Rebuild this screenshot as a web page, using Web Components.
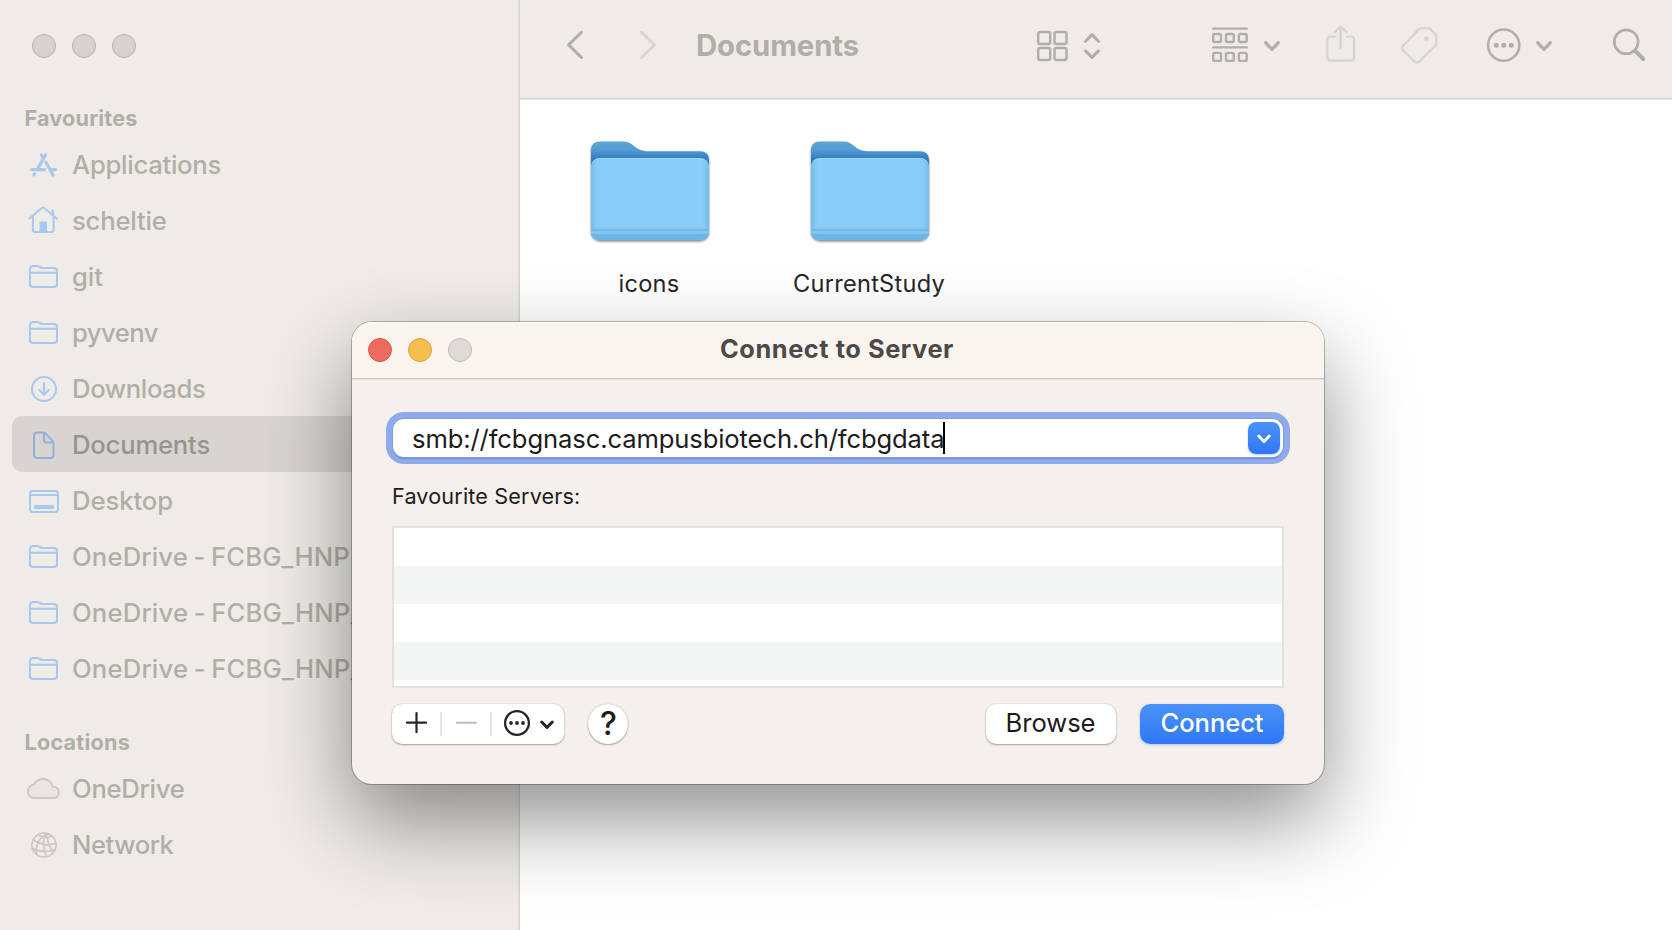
<!DOCTYPE html>
<html lang="en">
<head>
<meta charset="utf-8">
<title>Documents</title>
<style>
html,body{margin:0;height:100%;overflow:hidden;background:#fff}
body{font-family:Inter,"Liberation Sans",sans-serif;color:#262626}
</style>
</head>
<body>
<finder-app></finder-app>
<script>
const define=(name,html,init)=>{
  const t=document.createElement('template');
  t.innerHTML=html;
  customElements.define(name,class extends HTMLElement{
    constructor(){super();this.attachShadow({mode:'open'}).append(t.content.cloneNode(true));}
    connectedCallback(){if(init)init(this,this.shadowRoot);}
  });
};

/* icons: name -> [viewBox, markup] */
const folder='<path d="M4 11q0-3 3-3h4.3q1.4 0 2.4.9l.7.5q.8.6 1.9.6H28q3 0 3 3v13q0 3-3 3H7q-3 0-3-3zM4 14.8H31"/>';
const ICONS={
  apps:['0 0 36 36','<g stroke-width="3.2"><path d="M19.5 9 11.7 22.6M8.6 27.6 7.8 28.9M15.4 9 17 11.7M19.9 16.3 27 29M5.6 23.6H18.6M25.4 23.6H29.6"/></g>'],
  home:['0 0 36 36','<path d="M3 16.8 15.9 5.9q1.1-.9 2.2 0L31 16.8M6.9 14.5V28q0 2 2 2H25.6q2 0 2-2V14.5"/><path d="M13.5 30V21q0-1.5 1.5-1.5h4.5q1.5 0 1.5 1.5v9zM25.6 7.5h2.6v6.5l-2.6-2z" fill="currentColor" stroke="none"/>'],
  folder:['0 0 36 36',folder],
  down:['0 0 36 36','<circle cx="18" cy="19" r="12"/><path d="M18 13.2V24.6M13.3 20 18 24.7 22.7 20"/>'],
  doc:['0 0 36 36','<path d="M8 9.5q0-3 3-3h6q1.6 0 2.7 1.1l6.7 7q1.1 1.1 1.1 2.7V29q0 3-3 3H11q-3 0-3-3zM18 7V14.5q0 2 2 2H27"/>'],
  desktop:['0 0 36 36','<rect x="4" y="9" width="28" height="21" rx="3"/><path d="M4 12.9H32"/><rect x="8.2" y="23" width="19.6" height="4" rx=".6" fill="currentColor" stroke="none"/>'],
  cloud:['0 0 36 36','<path d="M8.2 28C4.600 28 2 25.500 2 21.600 2 17.700 4.600 14.800 8.300 14.300 9.800 11 13.300 9 17.300 9 21.900 9 25.700 12 26.600 16.600 30.300 16.600 33 19 33 22.300 33 25.700 30.300 28 26.900 28Z" fill="#e9e6e1"/>'],
  globe:['0 0 36 36','<g stroke-width="1.700"><circle cx="18" cy="19" r="12"/><path d="M7.300 13.800Q18 21.500 29.700 17.300M6.300 22.500Q17 27.500 28.300 24M22.500 7.800C12 11 9.500 20.500 10.500 28M19.500 7Q15 18 20.500 30.500M21.500 7.500Q20.500 18 27.500 26.200M12 8.800Q17.500 12.500 26 10.300"/></g>'],
  back:['566 20 18 50','<path stroke-width="3" d="M581.500 32.300 568.600 44.900 581.500 57.500"/>'],
  fwd:['639 20 18 50','<path stroke-width="3" d="M641.500 32.300 654.500 44.900 641.500 57.500"/>'],
  grid:['1036 20 33 50','<g stroke-width="2.500"><rect x="1038.200" y="32" width="12" height="11.900" rx="2"/><rect x="1054.500" y="32" width="12" height="11.900" rx="2"/><rect x="1038.200" y="48" width="12" height="11.900" rx="2"/><rect x="1054.500" y="48" width="12" height="11.900" rx="2"/></g>'],
  updown:['1083 20 18 50','<path stroke-width="3" d="M1085.500 41.200 1092 34.600 1098.500 41.200M1085.500 50.900 1092 57.400 1098.500 50.900"/>'],
  group:['1211 20 38 50','<g stroke-width="2.400"><path stroke-width="2.400" d="M1213.200 28.600H1246.800M1213.200 47.400H1246.800"/><rect x="1213.200" y="34" width="7.800" height="8" rx="1.500"/><rect x="1226" y="34" width="7.800" height="8" rx="1.500"/><rect x="1238.900" y="34" width="7.800" height="8" rx="1.500"/><rect x="1213.200" y="52.900" width="7.800" height="8" rx="1.500"/><rect x="1226" y="52.900" width="7.800" height="8" rx="1.500"/><rect x="1238.900" y="52.900" width="7.800" height="8" rx="1.500"/></g>'],
  chev:['1263 20 18 50','<path stroke-width="3.200" d="M1265.600 42.700 1272 49.300 1278.400 42.700"/>'],
  share:['1325 20 31 50','<path stroke-width="2.400" d="M1334.800 36.600H1330.300q-3 0-3 3V57.500q0 3 3 3H1351q3 0 3-3V39.600q0-3-3-3H1346.600"/><path stroke-width="2.600" d="M1340.600 27V47.700M1334.800 32.200 1340.600 26.400 1346.400 32.200"/>'],
  tag:['1400 20 39 50','<path stroke-width="2.400" d="M1418.300 29.600Q1419.600 28.400 1421.400 28.400H1427.600Q1429.400 28.400 1430.600 29.600L1435 34Q1436.300 35.300 1436.300 37V43.200Q1436.300 44.800 1435 46L1418.600 62Q1416.500 63.700 1414.500 61.800L1402.800 50.300Q1400.900 48.300 1402.800 46.200Z" transform="translate(.2 -.2)"/><circle cx="1426.500" cy="38.600" r="2.500" fill="currentColor" stroke="none"/>'],
  more:['1486 20 36 50','<circle cx="1503.700" cy="45.200" r="15.600" stroke-width="2.500"/><g fill="currentColor" stroke="none"><circle cx="1496.200" cy="45.200" r="2.500"/><circle cx="1503.700" cy="45.200" r="2.500"/><circle cx="1511.300" cy="45.200" r="2.500"/></g>'],
  search:['1612 20 34 50','<circle cx="1626.200" cy="41.800" r="11.900" stroke-width="2.700"/><path stroke-width="4" d="M1635.500 51.100 1643.200 59"/>'],
  plus:['0 0 22 22','<path stroke-width="2.200" d="M11.500 1.200V20.200M2 10.700H21"/>'],
  minus:['0 0 22 22','<path d="M2 10.700H21"/>'],
  dots:['0 0 28 28','<circle cx="14" cy="14" r="11.900" stroke-width="2.300"/><g fill="currentColor" stroke="none"><circle cx="8" cy="14" r="1.900"/><circle cx="14" cy="14" r="1.900"/><circle cx="20" cy="14" r="1.900"/></g>'],
  vee:['0 0 16 12','<path stroke-width="3" d="M2.700 3 8 8.400 13.300 3"/>']
};
define('mac-icon','<style>:host{display:block;flex:none;line-height:0}svg{display:block;fill:none;stroke:currentColor;stroke-width:2;stroke-linecap:round;stroke-linejoin:round}</style><span></span>',(el,r)=>{
  const icon=ICONS[el.getAttribute('name')];
  if(!icon)return;
  const [,,w,h]=icon[0].split(' ');
  r.querySelector('span').innerHTML=`<svg width="${w}" height="${h}" viewBox="${icon[0]}">${icon[1]}</svg>`;
});

/* label whose tracking is adjusted so that the run has the given width */
define('tracked-text','<style>:host{display:block;flex:none;white-space:nowrap}span{display:inline-block;white-space:pre}</style><span><slot></slot></span>',(el,r)=>{
  const s=r.querySelector('span'),w=+el.getAttribute('width'),n=[...el.textContent].length;
  queueMicrotask(()=>{
    const a=s.getBoundingClientRect().width;
    if(a)s.style.letterSpacing=((w-a)/n).toFixed(3)+'px';
  });
});

define('window-lights','<style>:host{display:flex;gap:16px;flex:none}i{width:24px;height:24px;border-radius:50%;box-sizing:border-box;border:1px solid #b5b2ae;background:#d6d3cf}:host([active]) i{border-color:#bcb9b6;background:#dedad7}:host([active]) i:nth-of-type(1){background:#ed6a5e;border-color:#d5564c}:host([active]) i:nth-of-type(2){background:#f5bf4f;border-color:#d9a13c}</style><i></i><i></i><i></i>');

define('side-item',`<style>
:host{display:flex;align-items:center;height:56px;box-sizing:border-box;margin:0 11px 0 12px;padding-left:14px;color:#b1aea9;font-size:25.700px;font-weight:500;line-height:30px;word-spacing:-1.500px;border-radius:10px}
:host([selected]){background:#d8d5d0;color:#97948f}
.icon{color:#a9c8ef;width:36px;margin-right:10px;flex:none}
:host([selected]) .icon{color:#8fb0dc}
:host([grey]) .icon{color:#cbc8c4}
.text{padding-top:1px}
</style><div class="icon"></div><div class="text"><slot></slot></div>`,(el,r)=>{
  const icon=document.createElement('mac-icon');
  icon.setAttribute('name',el.getAttribute('icon'));
  r.querySelector('.icon').replaceChildren(icon);
});

define('side-bar',`<style>
:host{display:flex;flex-direction:column;width:520px;box-sizing:border-box;background:#efece7;border-right:1px solid #d6d3d0;box-shadow:inset -2px 0 2px -1px #e2dfda;flex:none}
window-lights{margin:34px 0 42px 32px}
h2{margin:0;height:36px;padding-left:24.500px;font-size:21.600px;font-weight:650;line-height:36px;color:#b1aea9}
h2.loc{margin-top:28px}
</style>
<window-lights></window-lights>
<h2><tracked-text width="113">Favourites</tracked-text></h2>
<side-item icon="apps"><tracked-text width="149">Applications</tracked-text></side-item>
<side-item icon="home"><tracked-text width="94.500">scheltie</tracked-text></side-item>
<side-item icon="folder"><tracked-text width="31">git</tracked-text></side-item>
<side-item icon="folder"><tracked-text width="86">pyvenv</tracked-text></side-item>
<side-item icon="down"><tracked-text width="133.500">Downloads</tracked-text></side-item>
<side-item icon="doc" selected><tracked-text width="138">Documents</tracked-text></side-item>
<side-item icon="desktop"><tracked-text width="101">Desktop</tracked-text></side-item>
<side-item icon="folder"><tracked-text width="278">OneDrive - FCBG_HNP</tracked-text></side-item>
<side-item icon="folder"><tracked-text width="290.500">OneDrive - FCBG_HNP_</tracked-text></side-item>
<side-item icon="folder"><tracked-text width="290.500">OneDrive - FCBG_HNP_</tracked-text></side-item>
<h2 class="loc"><tracked-text width="105.500">Locations</tracked-text></h2>
<side-item icon="cloud" grey><tracked-text width="112.500">OneDrive</tracked-text></side-item>
<side-item icon="globe" grey><tracked-text width="101.500">Network</tracked-text></side-item>`);

define('finder-toolbar',`<style>
:host{display:flex;align-items:center;height:100px;box-sizing:border-box;padding:0 0 9px 46px;background:#efece8;border-bottom:1px solid #ececeb;box-shadow:inset 0 -1px #d3d1cf;color:#b1aea9}
.pale{color:#d8d5d1}
.fwd{margin-left:55px}
h1{margin:1px 0 0;padding-left:39px;width:340px;font-size:29.300px;font-weight:680;line-height:36px}
.u{margin-left:14px}.g{margin-left:110px}.c{margin-left:14px}.s{margin-left:44px}.t{margin-left:44px}.m{margin-left:47px}.c2{margin-left:13px}.f{margin-left:59px}
</style>
<mac-icon name="back"></mac-icon><mac-icon class="fwd pale" name="fwd"></mac-icon>
<h1><tracked-text width="163">Documents</tracked-text></h1>
<mac-icon name="grid"></mac-icon><mac-icon class="u" name="updown"></mac-icon>
<mac-icon class="g" name="group"></mac-icon><mac-icon class="c" name="chev"></mac-icon>
<mac-icon class="s pale" name="share"></mac-icon><mac-icon class="t pale" name="tag"></mac-icon>
<mac-icon class="m" name="more"></mac-icon><mac-icon class="c2" name="chev"></mac-icon>
<mac-icon class="f" name="search"></mac-icon>`);

define('folder-tile',`<style>
:host{display:flex;flex-direction:column;align-items:center;width:220px;font-size:23.600px;font-weight:400;line-height:30px}
svg{display:block;margin-bottom:22px}
div{margin-right:2px}
</style>
<svg width="126" height="110" viewBox="587 137 126 110">
<defs>
<linearGradient id="b" x1="0" y1="0" x2="0" y2="1"><stop offset="0" stop-color="#5ea5d6"/><stop offset=".3" stop-color="#559dd2"/><stop offset=".65" stop-color="#2f7cc4"/></linearGradient>
<linearGradient id="e" x1="0" x2="1" y1="0" y2="0"><stop offset="0" stop-color="#6fb9e8"/><stop offset=".07" stop-color="#88ccf6" stop-opacity="0"/><stop offset=".93" stop-color="#88ccf6" stop-opacity="0"/><stop offset="1" stop-color="#6fb9e8"/></linearGradient>
<filter id="s" x="-10%" y="-10%" width="120%" height="125%"><feDropShadow dx="0" dy="1.500" stdDeviation="1.200" flood-color="#000" flood-opacity=".5"/></filter>
</defs>
<g filter="url(#s)">
<path fill="url(#b)" d="M591 150.500Q591 141.500 600 141.500H624Q628 141.500 631 143.800L637 148.300Q641 151.200 646 151.200H700Q709 151.200 709 160V168H591Z"/>
<rect x="591" y="158" width="118" height="82" rx="9" fill="#89cdf7"/>
</g>
<rect x="591" y="158" width="118" height="82" rx="9" fill="url(#e)"/>
<path d="M592.500 162Q595 158.500 600 158.500H700Q705 158.500 707.500 162" fill="none" stroke="#9bd6f8"/>
<path d="M591 228H709V231Q709 240 700 240H600Q591 240 591 231Z" fill="#76bdec" opacity=".6"/>
<path d="M591 235H709Q707 240 700 240H600Q593 240 591 235Z" fill="#6db5e4"/>
<path d="M591 230.200H709" stroke="#6cb4e2"/><path d="M591 232.500H709" stroke="#83c8f2" stroke-width="2"/><path d="M591 234.500H709" stroke="#6cb4e2"/>
</svg><div><slot></slot></div>`);

define('finder-main',`<style>
:host{display:flex;flex-direction:column;flex:1;min-width:0;background:#fff}
section{display:flex;padding:37px 0 0 20px}
</style>
<finder-toolbar></finder-toolbar>
<section><folder-tile><tracked-text width="61">icons</tracked-text></folder-tile><folder-tile><tracked-text width="152">CurrentStudy</tracked-text></folder-tile></section>`);

define('push-button',`<style>
:host{display:flex;align-items:center;justify-content:center;height:40px;box-sizing:border-box;padding:0 1px 3px 0;border-radius:10px;background:#fff;box-shadow:0 0 1px rgba(0,0,0,.3),0 1px 2px rgba(0,0,0,.32);font-size:25.600px;font-weight:400;line-height:30px;color:#1c1c1c;flex:none}
:host([primary]){background:linear-gradient(#4a92f8,#2f78f5);color:#fff;font-weight:500;box-shadow:0 1px 3px rgba(60,110,230,.35);padding-right:0}
:host([round]){width:40px;border-radius:50%;font-size:32px;font-weight:500;padding:0 0 1px 1px}
</style><slot></slot>`);

define('segment-bar',`<style>
:host{display:flex;align-items:center;width:172px;height:40px;border-radius:10px;background:#fff;box-shadow:0 0 1px rgba(0,0,0,.3),0 1px 2px rgba(0,0,0,.32);color:#262626;flex:none}
div{display:flex;align-items:center;justify-content:center;width:48px;height:24px;padding-bottom:2px;box-sizing:border-box}
i{width:2px;height:24px;background:#e5e5e5}
.off{color:#bdbdbd}
.menu{gap:8px;flex:1;padding:0 0 0 2px}
.menu mac-icon:first-child{margin-top:-2px}
.menu mac-icon:last-child{margin-top:1px}
</style>
<div><mac-icon name="plus"></mac-icon></div><i></i><div class="off"><mac-icon name="minus"></mac-icon></div><i></i><div class="menu"><mac-icon name="dots"></mac-icon><mac-icon name="vee"></mac-icon></div>`);

define('address-field',`<style>
:host{display:flex;align-items:center;height:38px;margin:0 1px;box-sizing:border-box;padding:0 3px 0 19px;border-radius:11px;background:#fff;box-shadow:0 0 0 1px #7e9fe4,0 1.500px 0 .5px #7090d4,0 0 0 7px #8fabea;font-size:25.600px;font-weight:400;line-height:30px;color:#1c1c1c}
slot{display:block;padding-top:2px}
i{width:2px;height:32px;background:#000;margin-left:-2px}
span{flex:1}
b{display:flex;align-items:center;justify-content:center;width:32px;height:32px;border-radius:8px;background:linear-gradient(#4a92f8,#2f78f5);box-shadow:0 1px 2px rgba(60,110,230,.35);color:#fff}
b mac-icon{margin-top:1px}
</style><slot></slot><i></i><span></span><b><mac-icon name="vee"></mac-icon></b>`);

define('server-list',`<style>
:host{display:block;height:162px;box-sizing:border-box;border:2px solid #e2e2e1;background:repeating-linear-gradient(#fff 0 38px,#f3f5f4 38px 76px)}
</style>`);

define('connect-dialog',`<style>
:host{display:flex;flex-direction:column;box-sizing:border-box;width:972px;height:462px;border-radius:20px;background:#f5f0ec;box-shadow:0 0 0 1px rgba(0,0,0,.26),0 36px 86px rgba(0,0,0,.44);overflow:hidden}
header{display:grid;grid-template-columns:1fr auto 1fr;align-items:center;height:57px;box-sizing:border-box;padding:0 16px;background:#f9f4ee;border-bottom:1px solid #cbc7c3;box-shadow:0 1px #e6e1dd,inset 0 1px #fffdfb}
h1{margin:0;padding:0 2px 2px 0;font-size:25.400px;font-weight:700;line-height:30px;color:#4b4a48}
main{display:flex;flex-direction:column;padding:40px 40px 0}
label{display:block;margin:24px 0 0;height:45px;font-size:21.600px;font-weight:400;line-height:30px;color:#1c1c1c}
footer{display:flex;margin-top:16px}
.h{margin-left:24px}.b{margin-left:auto;width:130px}.c{margin-left:24px;width:144px}
</style>
<header><window-lights active></window-lights><h1><tracked-text width="234">Connect to Server</tracked-text></h1><span></span></header>
<main>
<address-field><tracked-text width="532.500">smb://fcbgnasc.campusbiotech.ch/fcbgdata</tracked-text></address-field>
<label><tracked-text width="188.500">Favourite Servers:</tracked-text></label>
<server-list></server-list>
<footer><segment-bar></segment-bar><push-button class="h" round>?</push-button><push-button class="b"><tracked-text width="90">Browse</tracked-text></push-button><push-button class="c" primary><tracked-text width="103">Connect</tracked-text></push-button></footer>
</main>`);

define('finder-app',`<style>
:host{display:flex;width:1672px;height:930px;position:relative;overflow:hidden}
connect-dialog{position:absolute;left:352px;top:322px}
</style><side-bar></side-bar><finder-main></finder-main><connect-dialog></connect-dialog>`);
</script>
</body>
</html>
